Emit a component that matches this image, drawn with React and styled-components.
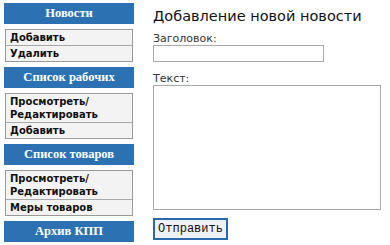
import React from "react"
import styled, {createGlobalStyle} from "styled-components"

const GlobalStyle = createGlobalStyle`
  html, body { margin: 0; padding: 0; background: #fff; }
  body { font-family: "DejaVu Sans", Verdana, sans-serif; }
`

const Page = styled.div`
  display: flex;
  align-items: flex-start;
  padding: 3px 4px;
`

const Sidebar = styled.nav`
  width: 130px;
  display: flex;
  flex-direction: column;
  gap: 5px;
  flex-shrink: 0;
`

const SectionHead = styled.div`
  height: 21px;
  line-height: 21px;
  background: #2c72b3;
  color: #fff;
  text-align: center;
  font-family: "Liberation Serif", "Times New Roman", serif;
  font-weight: bold;
  font-size: 12.5px;
`

const Menu = styled.ul`
  list-style: none;
  margin: 0 1px;
  padding: 0;
  border: 1px solid #9a9a9a;
  background: #f3f3f3;
`

const MenuItem = styled.li`
  padding: 1px 4px;
  font-size: 10px;
  font-weight: bold;
  line-height: 13px;
  color: #111;
  & + & { border-top: 1px solid #a8a8a8; }
`

const Main = styled.main`
  margin-left: 19px;
  display: flex;
  flex-direction: column;
  align-items: flex-start;
`

const Title = styled.h1`
  margin: 4px 0 0;
  font-size: 14.5px;
  line-height: 18px;
  font-weight: normal;
  color: #111;
`

const Label = styled.label`
  display: block;
  font-size: 11px;
  line-height: 13px;
  color: #333;
  margin-top: ${p => p.$top}px;
`

const TextInput = styled.input`
  box-sizing: border-box;
  width: 171px;
  height: 17px;
  margin: 0;
  border: 1px solid #a9a9a9;
  background: #fff;
`

const TextArea = styled.textarea`
  box-sizing: border-box;
  width: 228px;
  height: 125px;
  margin: 0;
  border: 1px solid #a9a9a9;
  resize: none;
  background: #fff;
`

const SubmitButton = styled.button`
  box-sizing: border-box;
  margin-top: 8px;
  width: 75px;
  height: 22px;
  padding: 0;
  border: 2px solid #2b6aa9;
  background: #eef2f7;
  font-family: "Liberation Mono", "Courier New", monospace;
  font-size: 12px;
  color: #111;
`

export default function App() {
    return (
        <>
            <GlobalStyle/>
            <Page>
                <Sidebar>
                    <SectionHead>Новости</SectionHead>
                    <Menu>
                        <MenuItem>Добавить</MenuItem>
                        <MenuItem>Удалить</MenuItem>
                    </Menu>
                    <SectionHead>Список рабочих</SectionHead>
                    <Menu>
                        <MenuItem>Просмотреть/<br/>Редактировать</MenuItem>
                        <MenuItem>Добавить</MenuItem>
                    </Menu>
                    <SectionHead>Список товаров</SectionHead>
                    <Menu>
                        <MenuItem>Просмотреть/<br/>Редактировать</MenuItem>
                        <MenuItem>Меры товаров</MenuItem>
                    </Menu>
                    <SectionHead>Архив КПП</SectionHead>
                </Sidebar>
                <Main>
                    <Title>Добавление новой новости</Title>
                    <Label $top={7}>Заголовок:</Label>
                    <TextInput/>
                    <Label $top={10}>Текст:</Label>
                    <TextArea/>
                    <SubmitButton>Отправить</SubmitButton>
                </Main>
            </Page>
        </>
    )
}
